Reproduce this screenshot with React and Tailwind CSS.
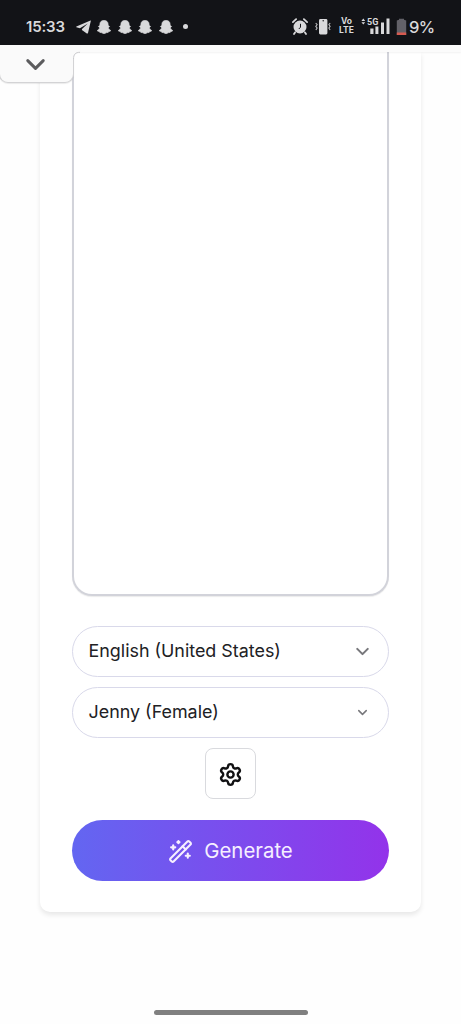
import React from 'react';
import { ChevronDown, Settings, WandSparkles } from 'lucide-react';

function TelegramIcon() {
  return (
    <svg width="15" height="14" viewBox="0 0 15 14" fill="#d9d9db">
      <path d="M14.5.6.4 6.5c-.4.2-.3.6 0 .7l3.5 1.1L11.8 3.4 6 9.1l-.1 1 4.9 3.3c.6.3 1 .1 1.2-.5L14.8 1c.1-.4-.1-.5-.3-.4z" />
    </svg>
  );
}

function GhostIcon() {
  return (
    <svg width="14" height="14" viewBox="0 0 14 14" fill="#d9d9db" stroke="#d9d9db" strokeWidth=".7" strokeLinejoin="round">
      <path d="M7 .4c2.6 0 4.1 1.6 4.1 3.9v1.6c.8-.2 1.5.2 1.3.8-.1.5-.7.7-1.1 1 .3 1.3 1 2.1 2.2 2.6.3.1.3.5 0 .7-.6.5-1.5.4-1.9.7-.3.3-.2.8-.7.8-.7 0-1.2-.1-1.8.3-.7.5-1.3.8-2.1.8s-1.4-.3-2.1-.8c-.6-.4-1.1-.3-1.8-.3-.5 0-.4-.5-.7-.8-.4-.3-1.3-.2-1.9-.7-.3-.2-.3-.6 0-.7 1.2-.5 1.9-1.3 2.2-2.6-.4-.3-1-.5-1.1-1-.2-.6.5-1 1.3-.8V4.3C2.9 2 4.4.4 7 .4z" />
    </svg>
  );
}

function AlarmIcon() {
  return (
    <svg width="16" height="17" viewBox="0 0 16 17" fill="#d9d9db">
      <circle cx="8" cy="9" r="6.5" />
      <path d="M3 14.5 2 16M13 14.5l1 1.5M.9 4.1 4.1 1.2M15.1 4.1l-3.2-2.9" stroke="#d9d9db" strokeWidth="1.8" strokeLinecap="round" />
      <path d="M8.5 5.8v3.4L6.8 11" stroke="#121317" strokeWidth="1" fill="none" />
    </svg>
  );
}

function VibrateIcon() {
  return (
    <svg width="16" height="17" viewBox="0 0 16 17" fill="none">
      <rect x="4" y="1" width="8.4" height="15.4" rx="1.4" fill="#d9d9db" />
      <circle cx="8.2" cy="2.8" r=".7" fill="#121317" />
      <path d="m.7 5 1.4 1.6L.8 8.4 2.1 10 .9 12M15.2 5l-1.3 1.6 1.2 1.8-1.2 1.6 1.2 2" stroke="#bcbcbf" strokeWidth="1.1" />
    </svg>
  );
}

function SignalIcon() {
  return (
    <svg width="30" height="18" viewBox="0 0 30 18" fill="#d9d9db">
      <path d="M.4 3.9 2.3 1.5l1.9 2.4zM.4 5.2h3.8L2.3 7.6z" />
      <text x="6" y="7.8" fontSize="9" fontWeight="700" fontFamily="Roboto, sans-serif">5G</text>
      <path d="M9.3 11.5h3.2V17H9.3zM14.4 9.5h3V17h-3zM20 5.5h3V17h-3zM25.5 1.5h3V17h-3z" />
    </svg>
  );
}

function StatusBar() {
  return (
    <div className="h-[45px] shrink-0 bg-[#121317] text-[#d9d9db] flex items-center justify-between pl-[26px] pr-[27px] pt-[7px]">
      <div className="flex items-center">
        <span className="w-[39px] mt-[2px] text-[15px] font-semibold tracking-[-0.15px]">15:33</span>
        <span className="ml-[11px] mt-[1px]"><TelegramIcon /></span>
        <div className="ml-[6px] mt-[1px] flex items-center gap-[6.5px]">
          <GhostIcon />
          <GhostIcon />
          <GhostIcon />
          <GhostIcon />
        </div>
        <span className="ml-[10px] size-[5px] rounded-full bg-[#d9d9db]" />
      </div>
      <div className="flex items-center">
        <AlarmIcon />
        <span className="ml-[7px]"><VibrateIcon /></span>
        <span className="ml-[8px] w-[15px] flex flex-col items-center text-[8.5px] leading-[9px] font-bold">
          <span>Vo</span>
          <span>LTE</span>
        </span>
        <span className="ml-[7px]"><SignalIcon /></span>
        <svg className="ml-[5px]" width="11" height="17" viewBox="0 0 11 17">
          <path d="M3 1.8V.8h5v1l2.2.7V17H.8V2.5z" fill="#626168" />
          <path d="M.8 14.5h9.4V17H.8z" fill="#d65a50" />
        </svg>
        <span className="ml-[2px] mt-[1px] w-[25px] text-[16.5px] leading-[20px] font-medium tracking-[-0.6px]">9%</span>
      </div>
    </div>
  );
}

function SelectField({ label, iconSize }) {
  return (
    <button className="h-[51px] w-full flex items-center justify-between rounded-full border border-[#d9d9ea] bg-white pl-[15.5px] text-[17.9px] text-[#212124]">
      <span>{label}</span>
      <span className="w-[52px] flex justify-center">
        <ChevronDown size={iconSize} strokeWidth={2.4} className="text-[#77777b]" />
      </span>
    </button>
  );
}

function App() {
  return (
    <div className="relative h-[1024px] w-[461px] overflow-hidden flex flex-col bg-[#fefefe] font-['Inter',sans-serif]">
      <StatusBar />

      {/* HeaderStrip */}
      <div className="relative z-10 h-[7px] shrink-0 bg-[#fbfbfb] shadow-[0_1px_2px_rgba(0,0,0,0.05)]">
        <div className="absolute left-[-1px] top-0 h-[38px] w-[75px] flex items-center justify-center rounded-b-[9px] border border-t-0 border-[#d3d3d5] bg-[#fafafa] shadow-[0_1px_1px_rgba(0,0,0,0.08)]">
          <ChevronDown size={31} strokeWidth={2.3} className="-ml-[2px] mt-[1px] text-[#5c5c5e]" />
        </div>
        {/* inner curve where the tab meets the strip */}
        <svg className="absolute left-[73px] top-0" width="8" height="14" viewBox="0 0 8 14">
          <path d="M0 0h8v7H6C3 7 1 9 1 13H0z" fill="#fafafa" />
          <path d="M.5 14C.5 9.5 2.5 7.3 7 7.3" fill="none" stroke="#cbcbce" />
        </svg>
      </div>

      {/* FormCard */}
      <div className="mx-[40px] h-[860px] shrink-0 rounded-b-[10px] bg-white px-[32px] flex flex-col items-center shadow-[0_3px_5px_rgba(0,0,0,0.09)]">
        <textarea className="h-[544px] w-[317px] shrink-0 resize-none rounded-b-[20px] border-2 border-t-0 border-[#d2d3da] bg-white shadow-[0_1px_1px_rgba(0,0,0,0.08)] outline-none" />
        <div className="mt-[30px] w-[317px] flex flex-col gap-[10px]">
          <SelectField label="English (United States)" iconSize={21} />
          <SelectField label="Jenny (Female)" iconSize={15} />
        </div>
        <button className="mt-[10px] size-[51px] flex items-center justify-center rounded-[8px] border border-[#d9dade] bg-white pt-[1px] text-[#111113]">
          <Settings size={25} strokeWidth={2.3} />
        </button>
        <button className="mt-[21px] h-[61px] w-[317px] flex items-center justify-center gap-[11px] rounded-full bg-linear-to-r/srgb from-[#6366f1] to-[#9333ea] pt-[1px] text-[20.4px] text-[#f6efff]">
          <WandSparkles size={25} strokeWidth={2} />
          <span>Generate</span>
        </button>
      </div>

      {/* GestureBar */}
      <div className="mt-[98px] mx-auto h-[5px] w-[154px] shrink-0 rounded-full bg-[#808080]" />
    </div>
  );
}

export default App;
